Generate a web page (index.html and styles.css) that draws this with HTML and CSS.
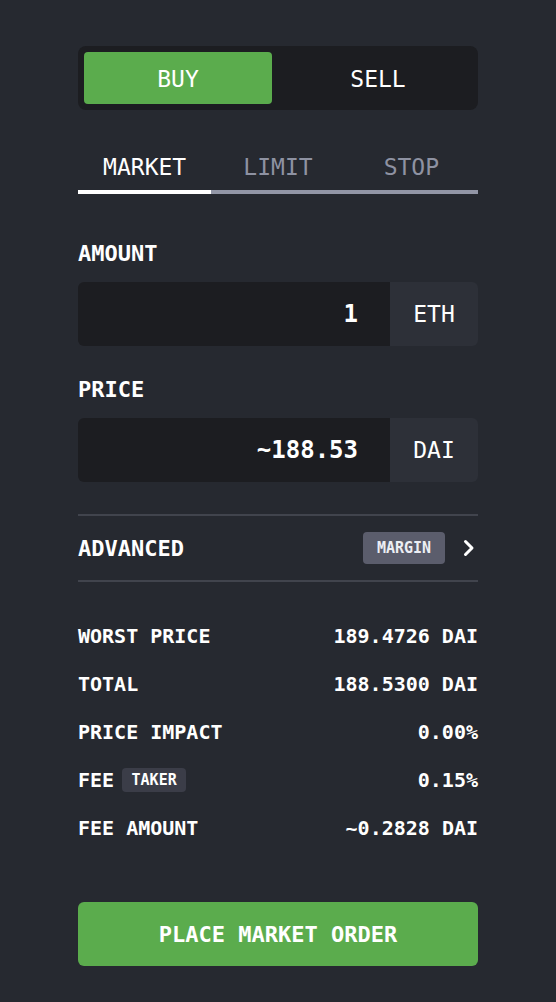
FILE: index.html
```html
<!DOCTYPE html>
<html lang="en">
<head>
    <meta charset="UTF-8">
    <meta name="viewport" content="width=device-width, initial-scale=1.0">
    <title>Order form</title>
    <link rel="stylesheet" href="styles.css">
</head>
<body>
    <div class="order-form">
        <div class="side-toggle">
            <button class="side-btn active">BUY</button>
            <button class="side-btn">SELL</button>
        </div>

        <div class="tabs">
            <div class="tab active">MARKET</div>
            <div class="tab">LIMIT</div>
            <div class="tab">STOP</div>
        </div>

        <label class="field-label" for="amount">AMOUNT</label>
        <div class="field">
            <input type="text" id="amount" class="field-input" value="1">
            <span class="field-unit">ETH</span>
        </div>

        <label class="field-label" for="price">PRICE</label>
        <div class="field">
            <input type="text" id="price" class="field-input" value="~188.53" readonly>
            <span class="field-unit">DAI</span>
        </div>

        <div class="advanced">
            <span>ADVANCED</span>
            <div class="advanced-right">
                <span class="badge badge-margin">MARGIN</span>
                <svg class="chevron" width="12" height="18" viewBox="0 0 12 18">
                    <polyline points="2.5,2.5 9,9 2.5,15.5" fill="none" stroke="#fff" stroke-width="3" stroke-linecap="round" stroke-linejoin="round"/>
                </svg>
            </div>
        </div>

        <div class="summary">
            <div class="summary-row"><span>WORST PRICE</span><span>189.4726 DAI</span></div>
            <div class="summary-row"><span>TOTAL</span><span>188.5300 DAI</span></div>
            <div class="summary-row"><span>PRICE IMPACT</span><span>0.00%</span></div>
            <div class="summary-row">
                <span class="row-name"><span>FEE</span><span class="badge badge-taker">TAKER</span></span>
                <span>0.15%</span>
            </div>
            <div class="summary-row"><span>FEE AMOUNT</span><span>~0.2828 DAI</span></div>
        </div>

        <button class="place-btn">PLACE MARKET ORDER</button>
    </div>
</body>
</html>
```

FILE: styles.css
```css
body {
    margin: 0;
    background-color: #262930;
    color: #fff;
    font-family: "DejaVu Sans Mono", "Liberation Mono", monospace;
}
.order-form {
    width: 400px;
    margin: 0 auto;
    padding: 46px 0 36px;
}
.side-toggle {
    display: grid;
    grid-template-columns: 1fr 1fr;
    gap: 12px;
    padding: 6px;
    background-color: #1c1d21;
    border-radius: 8px;
}
.side-btn {
    height: 52px;
    border: none;
    border-radius: 4px;
    background: transparent;
    color: #fff;
    font-family: inherit;
    font-size: 23px;
    padding-top: 2px;
}
.side-btn.active {
    background-color: #5bac4d;
}
.tabs {
    display: flex;
    margin-top: 36px;
}
.tab {
    flex: 1;
    text-align: center;
    font-size: 23px;
    line-height: 42px;
    padding-bottom: 2px;
    color: #8e92a2;
    border-bottom: 4px solid #9296a6;
}
.tab.active {
    color: #fff;
    border-bottom-color: #fff;
}
.field-label {
    display: block;
    margin-top: 46px;
    font-size: 22px;
    font-weight: bold;
    line-height: 28px;
}
.field-label + .field {
    margin-top: 14px;
}
.field + .field-label {
    margin-top: 30px;
}
.field {
    display: flex;
    height: 64px;
    border-radius: 6px;
    overflow: hidden;
}
.field-input {
    flex: 1;
    min-width: 0;
    border: none;
    outline: none;
    padding: 0 32px 0 16px;
    background-color: #1c1d21;
    color: #fff;
    font-family: inherit;
    font-size: 24px;
    font-weight: bold;
    text-align: right;
}
.field-unit {
    width: 88px;
    display: flex;
    align-items: center;
    justify-content: center;
    background-color: #2d3038;
    font-size: 23px;
}
.advanced {
    display: flex;
    justify-content: space-between;
    align-items: center;
    height: 64px;
    margin-top: 32px;
    border-top: 2px solid #41444d;
    border-bottom: 2px solid #41444d;
    font-size: 22px;
    font-weight: bold;
}
.advanced-right {
    display: flex;
    align-items: center;
    gap: 18px;
    padding-right: 3px;
}
.badge {
    display: inline-flex;
    align-items: center;
    justify-content: center;
    border-radius: 4px;
    font-size: 15px;
    font-weight: bold;
}
.badge-margin {
    width: 82px;
    height: 32px;
    background-color: #5b5d6c;
    color: #eceef4;
}
.badge-taker {
    width: 64px;
    height: 24px;
    background-color: #3b3d48;
}
.summary {
    margin-top: 30px;
}
.summary-row {
    display: flex;
    justify-content: space-between;
    align-items: center;
    height: 48px;
    font-size: 20px;
    font-weight: bold;
}
.row-name {
    display: flex;
    align-items: center;
    gap: 8px;
}
.place-btn {
    display: block;
    width: 100%;
    height: 64px;
    margin-top: 50px;
    border: none;
    border-radius: 6px;
    background-color: #5bac4d;
    color: #fff;
    font-family: inherit;
    font-size: 22px;
    font-weight: bold;
}
```
